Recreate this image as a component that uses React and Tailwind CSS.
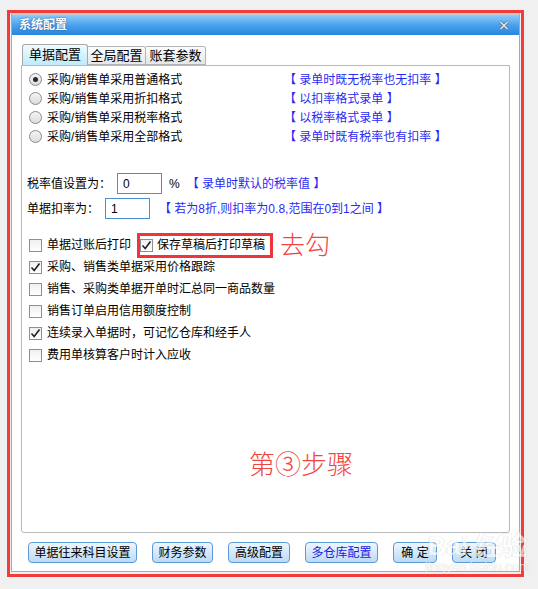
import React from 'react';

const font = { fontFamily: '"Liberation Sans", "Noto Sans CJK SC", sans-serif' };

const Radio = ({ checked }) => (
  <span className="w-[13px] h-[13px] rounded-full border border-[#8a8a8a] bg-gradient-to-b from-[#f4f4f4] to-[#dcdcdc] flex items-center justify-center shrink-0">
    {checked && <span className="w-[5px] h-[5px] rounded-full bg-[#2a2a2a]" />}
  </span>
);

const Check = ({ checked }) => (
  <span className="w-[13px] h-[13px] border border-[#8e8f8f] bg-gradient-to-b from-[#f0f0f0] to-[#ffffff] flex items-center justify-center shrink-0">
    {checked && (
      <svg width="11" height="11" viewBox="0 0 11 11">
        <path d="M1.5 5.5 L4.2 8.5 L9.5 1.5" fill="none" stroke="#222" strokeWidth="1.6" />
      </svg>
    )}
  </span>
);

const Note = ({ children }) => <span className="text-[#2a2af2]">【 {children} 】</span>;

const radios = [
  ['采购/销售单采用普通格式', '录单时既无税率也无扣率', true],
  ['采购/销售单采用折扣格式', '以扣率格式录单', false],
  ['采购/销售单采用税率格式', '以税率格式录单', false],
  ['采购/销售单采用全部格式', '录单时既有税率也有扣率', false],
];

const checks = [
  ['采购、销售类单据采用价格跟踪', true],
  ['销售、采购类单据开单时汇总同一商品数量', false],
  ['销售订单启用信用额度控制', false],
  ['连续录入单据时，可记忆仓库和经手人', true],
  ['费用单核算客户时计入应收', false],
];

const buttons = [
  ['单据往来科目设置', 'w-[109px]', 'text-black'],
  ['财务参数', 'w-[61px]', 'text-black'],
  ['高级配置', 'w-[62px]', 'text-black'],
  ['多仓库配置', 'w-[73px]', 'text-[#1a1ae0]'],
  ['确 定', 'w-[44px]', 'text-black'],
  ['关 闭', 'w-[44px]', 'text-black'],
];

export default function App() {
  return (
    <div className="w-[538px] h-[589px] bg-[#f0f0f0] pl-[7px] pt-[10px] text-[12px] relative" style={font}>
      <div className="w-[517px] h-[567px] border-[3px] border-[#f23b3b] flex flex-col">
        <div className="flex-1 mx-[1px] mb-[2px] flex flex-col border border-[#7fb2e6] border-t-[#c9c9c9] border-t-2">
          {/* title bar */}
          <div className="h-[20px] shrink-0 bg-gradient-to-b from-[#8ecbf9] via-[#4aa2ec] to-[#2585de] flex items-center justify-between pl-[7px] pr-[10px]">
            <span className="text-white font-bold text-[12px] [text-shadow:0_0_2px_#1d4f86]">系统配置</span>
            <svg width="10" height="9" viewBox="0 0 10 9">
              <path d="M1.5 1 L8.5 8 M8.5 1 L1.5 8" stroke="#5b7388" strokeWidth="3" />
              <path d="M1.5 1 L8.5 8 M8.5 1 L1.5 8" stroke="#dfe9f2" strokeWidth="1.5" />
            </svg>
          </div>

          <div className="flex-1 bg-white flex flex-col px-[9px] pt-[9px]">
            {/* tabs */}
            <div className="h-[21px] flex items-end shrink-0">
              <div className="h-[21px] w-[66px] border border-b-0 border-[#a8a8a8] rounded-t-[3px] bg-gradient-to-b from-[#eefbff] to-[#bfeafc] flex items-center justify-center text-[13px] ml-[1px]">单据配置</div>
              <div className="h-[19px] w-[58px] border border-l-0 border-[#b4b4b4] rounded-tr-[3px] bg-gradient-to-b from-[#fdfdfd] to-[#e6e6e6] flex items-center justify-center text-[13px]">全局配置</div>
              <div className="h-[19px] w-[60px] border border-l-0 border-[#b4b4b4] rounded-tr-[3px] bg-gradient-to-b from-[#fdfdfd] to-[#e6e6e6] flex items-center justify-center text-[13px]">账套参数</div>
            </div>

            {/* panel */}
            <div className="h-[468px] shrink-0 border border-[#b9b9b9] rounded-b-[3px] pl-[7px] pt-[4px] flex flex-col">
              {radios.map(([label, note, on]) => (
                <div key={label} className="h-[19px] flex items-center">
                  <div className="w-[255px] flex items-center gap-[5px]">
                    <Radio checked={on} />
                    <span>{label}</span>
                  </div>
                  <Note>{note}</Note>
                </div>
              ))}

              <div className="mt-[27px] -ml-[2px] h-[21px] flex items-center">
                <span>税率值设置为：</span>
                <span className="ml-[6px] w-[45px] h-[21px] border border-[#4a8fd4] flex items-center pl-[5px]">0</span>
                <span className="ml-[7px]">%</span>
                <span className="ml-[7px]"><Note>录单时默认的税率值</Note></span>
              </div>
              <div className="mt-[4px] -ml-[2px] h-[21px] flex items-center">
                <span>单据扣率为：</span>
                <span className="ml-[6px] w-[45px] h-[21px] border border-[#4a8fd4] flex items-center pl-[5px]">1</span>
                <span className="ml-[9px]"><Note>若为8折,则扣率为0.8,范围在0到1之间</Note></span>
              </div>

              <div className="mt-[15px] h-[22px] flex items-center">
                <Check checked={false} />
                <span className="ml-[5px]">单据过账后打印</span>
                <div className="ml-[6px] h-[25px] border-[3px] border-[#f0353a] flex items-center pr-[5px]">
                  <Check checked={true} />
                  <span className="ml-[4px]">保存草稿后打印草稿</span>
                </div>
                <span className="ml-[7px] text-[25px] leading-[26px] text-[#f2443f] font-light">去勾</span>
              </div>
              {checks.map(([label, on]) => (
                <div key={label} className="h-[22px] flex items-center gap-[5px]">
                  <Check checked={on} />
                  <span>{label}</span>
                </div>
              ))}

              <div className="mt-[86px] ml-[220px] text-[26px] leading-[26px] text-[#f2443f] font-light">第③步骤</div>
            </div>

            {/* buttons */}
            <div className="mt-[9px] h-[21px] pl-[7px] flex gap-[15px] shrink-0">
              {buttons.map(([label, w, c]) => (
                <div key={label} className={`${w} ${c} h-[21px] rounded-[4px] border border-[#5c9ad6] bg-gradient-to-b from-[#eef6fe] to-[#bcdaf5] flex items-center justify-center`}>
                  {label}
                </div>
              ))}
            </div>
          </div>
        </div>
      </div>

      {/* watermark */}
      <div className="absolute left-[425px] top-[532px] flex flex-col items-center opacity-60 pointer-events-none">
        <span className="text-[26px] leading-[28px] font-bold text-white [text-shadow:0_0_1px_#9a9a9a]">Bai 经验</span>
        <span className="text-[13px] leading-[14px] text-white [text-shadow:0_0_1px_#9a9a9a]">jingyan.baidu.com</span>
      </div>
    </div>
  );
}
